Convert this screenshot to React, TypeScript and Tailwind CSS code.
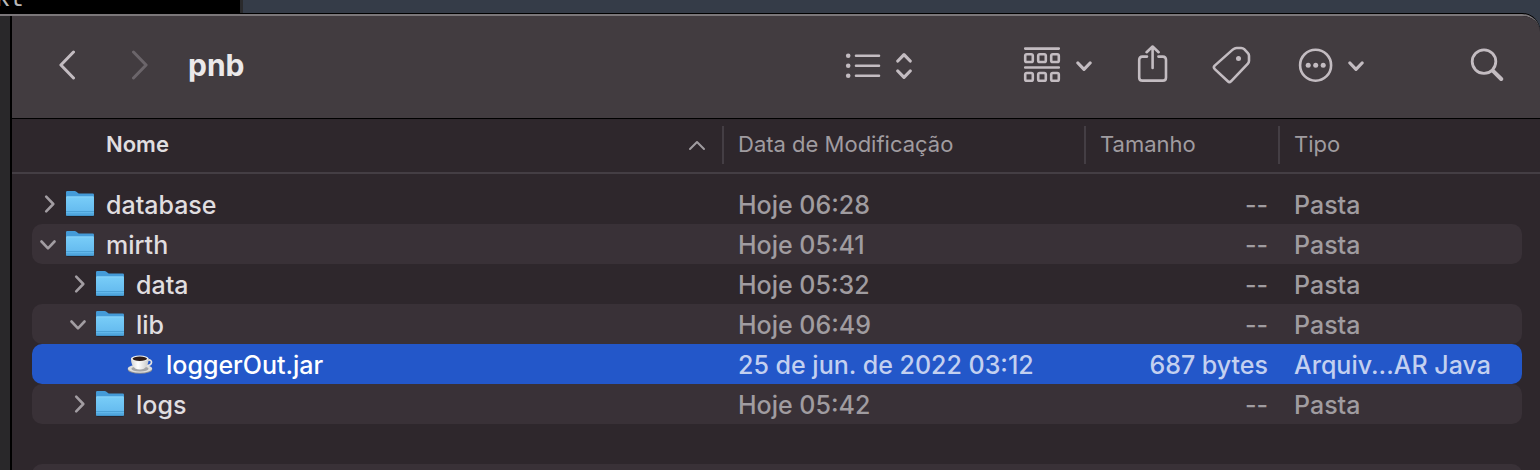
import type { ReactNode } from "react";

type Entry = {
  name: string;
  level: 0 | 1 | 2;
  state?: "open" | "closed";
  date: string;
  size: string;
  kind: string;
  selected?: boolean;
};

const entries: Entry[] = [
  { name: "database", level: 0, state: "closed", date: "Hoje 06:28", size: "--", kind: "Pasta" },
  { name: "mirth", level: 0, state: "open", date: "Hoje 05:41", size: "--", kind: "Pasta" },
  { name: "data", level: 1, state: "closed", date: "Hoje 05:32", size: "--", kind: "Pasta" },
  { name: "lib", level: 1, state: "open", date: "Hoje 06:49", size: "--", kind: "Pasta" },
  {
    name: "loggerOut.jar",
    level: 2,
    date: "25 de jun. de 2022 03:12",
    size: "687 bytes",
    kind: "Arquiv...AR Java",
    selected: true,
  },
  { name: "logs", level: 1, state: "closed", date: "Hoje 05:42", size: "--", kind: "Pasta" },
];

const indent = ["pl-2", "pl-[38px]", "pl-[68px]"];

function Icon({ width, stroke = 2.6, children }: { width: number; stroke?: number; children: ReactNode }) {
  return (
    <svg
      width={width}
      height={40}
      viewBox={`0 0 ${width} 40`}
      fill="none"
      stroke="currentColor"
      strokeWidth={stroke}
      strokeLinecap="round"
      strokeLinejoin="round"
      aria-hidden="true"
    >
      {children}
    </svg>
  );
}

function SmallChevron() {
  return (
    <Icon width={16} stroke={3.2}>
      <path d="M1.9 18L8 24.3L14.1 18" />
    </Icon>
  );
}

function Folder() {
  return (
    <svg width="28" height="28" viewBox="0 0 28 28" className="shrink-0" aria-hidden="true">
      <defs>
        <linearGradient id="folder-front" x1="0" y1="0" x2="0" y2="1">
          <stop offset="0" stopColor="#79cdf8" />
          <stop offset="0.7" stopColor="#67bdf0" />
          <stop offset="1" stopColor="#56ace2" />
        </linearGradient>
      </defs>
      <rect x="0.5" y="25" width="27" height="2" rx="1" fill="#000" opacity="0.35" />
      <path d="M0 2.2Q0 1 1.2 1H8.6Q9.6 1 10.4 1.7L12 3.1Q12.6 3.6 13.6 3.6H26.8Q28 3.6 28 4.8V12H0Z" fill="#449bd8" />
      <path d="M0 7.2Q0 6.6 1 6.6H27Q28 6.6 28 7.2V24.8Q28 26 26.8 26H1.2Q0 26 0 24.8Z" fill="url(#folder-front)" />
      <path d="M0.6 6.9H27.4" stroke="#93dafc" strokeWidth="0.7" />
      <path d="M0 21.5H28M0 24H28" stroke="#459ad0" strokeWidth="0.8" />
      <path d="M0.6 25.6H27.4" stroke="#3b8cc4" strokeWidth="0.8" />
    </svg>
  );
}

function Cup() {
  return (
    <svg width="28" height="28" viewBox="0 0 28 28" className="shrink-0" aria-hidden="true">
      <defs>
        <linearGradient id="cup-side" x1="0" y1="0" x2="1" y2="0">
          <stop offset="0" stopColor="#d5d5d3" />
          <stop offset="0.4" stopColor="#ffffff" />
          <stop offset="1" stopColor="#c9c9c7" />
        </linearGradient>
      </defs>
      <ellipse cx="14" cy="19.4" rx="12.2" ry="4.4" fill="#8d8f94" />
      <ellipse cx="14" cy="18.6" rx="12.2" ry="4.2" fill="#dededc" />
      <ellipse cx="14" cy="18.8" rx="8.6" ry="2.7" fill="#a3a4a6" />
      <path d="M21.5 10.2C27 8.6 27 15.6 20.6 15.4" fill="none" stroke="#e4e4e2" strokeWidth="1.7" />
      <path d="M5 8.6C5 14.6 7.2 19.6 13.8 19.6S22.6 14.6 22.6 8.6Z" fill="url(#cup-side)" />
      <ellipse cx="13.8" cy="8.6" rx="8.8" ry="3.1" fill="#f1f1ef" />
      <ellipse cx="13.8" cy="8.8" rx="7.2" ry="2.2" fill="#2d1c18" />
    </svg>
  );
}

function Disclosure({ entry }: { entry: Entry }) {
  if (!entry.state) return <span className="w-4 shrink-0" />;
  const open = entry.state === "open";
  return (
    <button
      type="button"
      aria-expanded={open}
      aria-label={`${open ? "Fechar" : "Abrir"} ${entry.name}`}
      className="w-4 shrink-0 text-[#a29da2]"
    >
      <Icon width={16} stroke={2.6}>
        <path d={open ? "M1.5 17.5L8 24.3L14.5 17.5" : "M6.2 12.7L13.3 20L6.2 27.3"} />
      </Icon>
    </button>
  );
}

function Toolbar() {
  return (
    <header className="flex h-[103px] shrink-0 items-center border-b border-black bg-[#423c40] pr-9 pb-[4px] pl-[47px] text-[#c3bcc1]">
      <button type="button" aria-label="Voltar">
        <Icon width={16} stroke={3}>
          <path d="M14.5 7L1.9 20L14.5 33" />
        </Icon>
      </button>
      <button type="button" aria-label="Avançar" className="ml-[57px] text-[#6b656a]">
        <Icon width={16} stroke={3}>
          <path d="M1.5 7L14.1 20L1.5 33" />
        </Icon>
      </button>
      <h1 className="ml-10 text-[30px] leading-10 font-bold text-[#ebe9ea]">pnb</h1>

      <button type="button" aria-label="Visualização em lista" className="ml-auto flex gap-[15px]">
        <Icon width={36}>
          <path d="M11 10.7H34M11 20.7H34M11 30.7H34" />
          <g fill="currentColor" stroke="none">
            <circle cx="3.2" cy="10.7" r="2.3" />
            <circle cx="3.2" cy="20.7" r="2.3" />
            <circle cx="3.2" cy="30.7" r="2.3" />
          </g>
        </Icon>
        <Icon width={16} stroke={3.2}>
          <path d="M1.8 16L8 9.6L14.2 16M1.8 26L8 32.4L14.2 26" />
        </Icon>
      </button>
      <button type="button" aria-label="Agrupar" className="ml-[111px] flex gap-[15px]">
        <Icon width={38}>
          <path d="M2.2 3.6H35.8M2.2 22.5H35.8" />
          <rect x="2.2" y="9.2" width="7.6" height="7.8" rx="1.6" />
          <rect x="15.2" y="9.2" width="7.6" height="7.8" rx="1.6" />
          <rect x="28.2" y="9.2" width="7.6" height="7.8" rx="1.6" />
          <rect x="2.2" y="28" width="7.6" height="7.8" rx="1.6" />
          <rect x="15.2" y="28" width="7.6" height="7.8" rx="1.6" />
          <rect x="28.2" y="28" width="7.6" height="7.8" rx="1.6" />
        </Icon>
        <SmallChevron />
      </button>
      <button type="button" aria-label="Compartilhar" className="ml-[45px]">
        <Icon width={32}>
          <path d="M10 11.6H5.4Q2.2 11.6 2.2 14.8V32.4Q2.2 35.6 5.4 35.6H25.8Q29 35.6 29 32.4V14.8Q29 11.6 25.8 11.6H21.4" />
          <path d="M15.6 23V1.8M9.6 7.2L15.6 1.5L21.6 7.2" />
        </Icon>
      </button>
      <button type="button" aria-label="Etiquetas" className="ml-[43px]">
        <Icon width={39}>
          <path d="M22.3 3.6Q23.4 3 24.6 3H29.2Q31 3 32.2 4.2L35.7 7.8Q37 9.1 37 10.8V15.8Q37 17.4 35.9 18.6L19 36.3Q17.4 37.8 15.8 36.3L2.8 24.1Q1 22.4 2.7 20.6L20.4 4.9Q21.3 4.1 22.3 3.6Z" />
          <circle cx="26.5" cy="13.6" r="2.5" fill="currentColor" stroke="none" />
        </Icon>
      </button>
      <button type="button" aria-label="Mais ações" className="ml-[47px] flex gap-3.5">
        <Icon width={36}>
          <circle cx="17.6" cy="20.2" r="15.5" />
          <g fill="currentColor" stroke="none">
            <circle cx="10.2" cy="20.2" r="2.5" />
            <circle cx="17.7" cy="20.2" r="2.5" />
            <circle cx="25.2" cy="20.2" r="2.5" />
          </g>
        </Icon>
        <SmallChevron />
      </button>
      <button type="button" aria-label="Buscar" className="ml-[106px]">
        <Icon width={34} stroke={2.8}>
          <circle cx="14" cy="16.6" r="11.8" />
          <path d="M23 25.8L31.2 34" strokeWidth="4" />
        </Icon>
      </button>
    </header>
  );
}

function FileTable() {
  return (
    <table className="w-full table-fixed border-separate border-spacing-0 text-left whitespace-nowrap">
      <colgroup>
        <col className="w-5" />
        <col />
        <col className="w-[362px]" />
        <col className="w-[194px]" />
        <col className="w-[242px]" />
        <col className="w-[18px]" />
      </colgroup>
      <thead className="text-[22px] leading-9 text-[#a09ca0] [&_td]:border-b-2 [&_td]:border-[#443e44] [&_th]:border-b-2 [&_th]:border-[#443e44] [&_th]:pt-[7px] [&_th]:align-top [&_th]:font-normal">
        <tr className="h-[55px]">
          <td />
          <th scope="col" aria-sort="ascending">
            <div className="flex h-[38px] items-start justify-between border-r-2 border-[#443e44] pr-4 pl-[74px]">
              <span className="font-semibold text-[#e0dee0]">Nome</span>
              <Icon width={18} stroke={2}>
                <path d="M2 23L9 16L16 23" />
              </Icon>
            </div>
          </th>
          <th scope="col">
            <div className="h-[38px] border-r-2 border-[#443e44] pl-3.5">Data de Modificação</div>
          </th>
          <th scope="col">
            <div className="h-[38px] border-r-2 border-[#443e44] pl-3.5">Tamanho</div>
          </th>
          <th scope="col">
            <div className="h-[38px] pl-3.5">Tipo</div>
          </th>
          <td />
        </tr>
      </thead>
      <tbody className="text-[25px] leading-[38px] font-medium before:block before:h-2.5">
        {entries.map((entry, i) => {
          const fill = entry.selected ? "bg-[#2357c9]" : i % 2 ? "bg-[#393137]" : "";
          const muted = entry.selected ? "text-[#c3d0f0]" : "text-[#a09ca0]";
          return (
            <tr key={entry.name} aria-selected={!!entry.selected} className="h-10">
              <td />
              <td className={`rounded-l-[10px] ${fill}`}>
                <div className={`flex h-10 items-center ${indent[entry.level]} ${entry.selected ? "text-white" : "text-[#e0dee0]"}`}>
                  <Disclosure entry={entry} />
                  <span className="mr-3 ml-2.5">{entry.state ? <Folder /> : <Cup />}</span>
                  <span className="pt-0.5">{entry.name}</span>
                </div>
              </td>
              <td className={fill}>
                <div className={`pt-0.5 pl-3.5 ${muted}`}>{entry.date}</div>
              </td>
              <td className={fill}>
                <div className={`pt-0.5 pr-3 text-right ${muted}`}>{entry.size}</div>
              </td>
              <td className={`rounded-r-[10px] ${fill}`}>
                <div className={`pt-0.5 pl-3.5 ${muted}`}>{entry.kind}</div>
              </td>
              <td />
            </tr>
          );
        })}
      </tbody>
    </table>
  );
}

export default function App() {
  return (
    <div className="flex h-screen flex-col overflow-hidden bg-[#353c48] font-['Inter',sans-serif]">
      <div className="flex h-[13px] shrink-0">
        <div className="w-[243px] overflow-hidden border-r-3 border-[#2a2a2c] bg-black">
          <p className="-mt-[14px] -ml-[5px] font-['DejaVu_Sans_Mono',monospace] text-[24px] leading-6 text-[#b8b8b8]">kt</p>
        </div>
      </div>
      <div className="flex min-h-0 flex-1 rounded-tr-[18px] border-t border-black bg-black">
        <div className="flex min-w-0 flex-1 overflow-hidden rounded-tr-[18px] border-t-2 border-[#7b777a]">
          <aside className="w-3 shrink-0 border-r-2 border-black bg-[#29282a]" />
          <main className="flex min-w-0 flex-1 flex-col bg-[#2e272c]">
            <Toolbar />
            <FileTable />
            <div className="mt-10 mr-[18px] ml-5 h-10 shrink-0 rounded-[10px] bg-[#393137]" />
          </main>
        </div>
      </div>
    </div>
  );
}
